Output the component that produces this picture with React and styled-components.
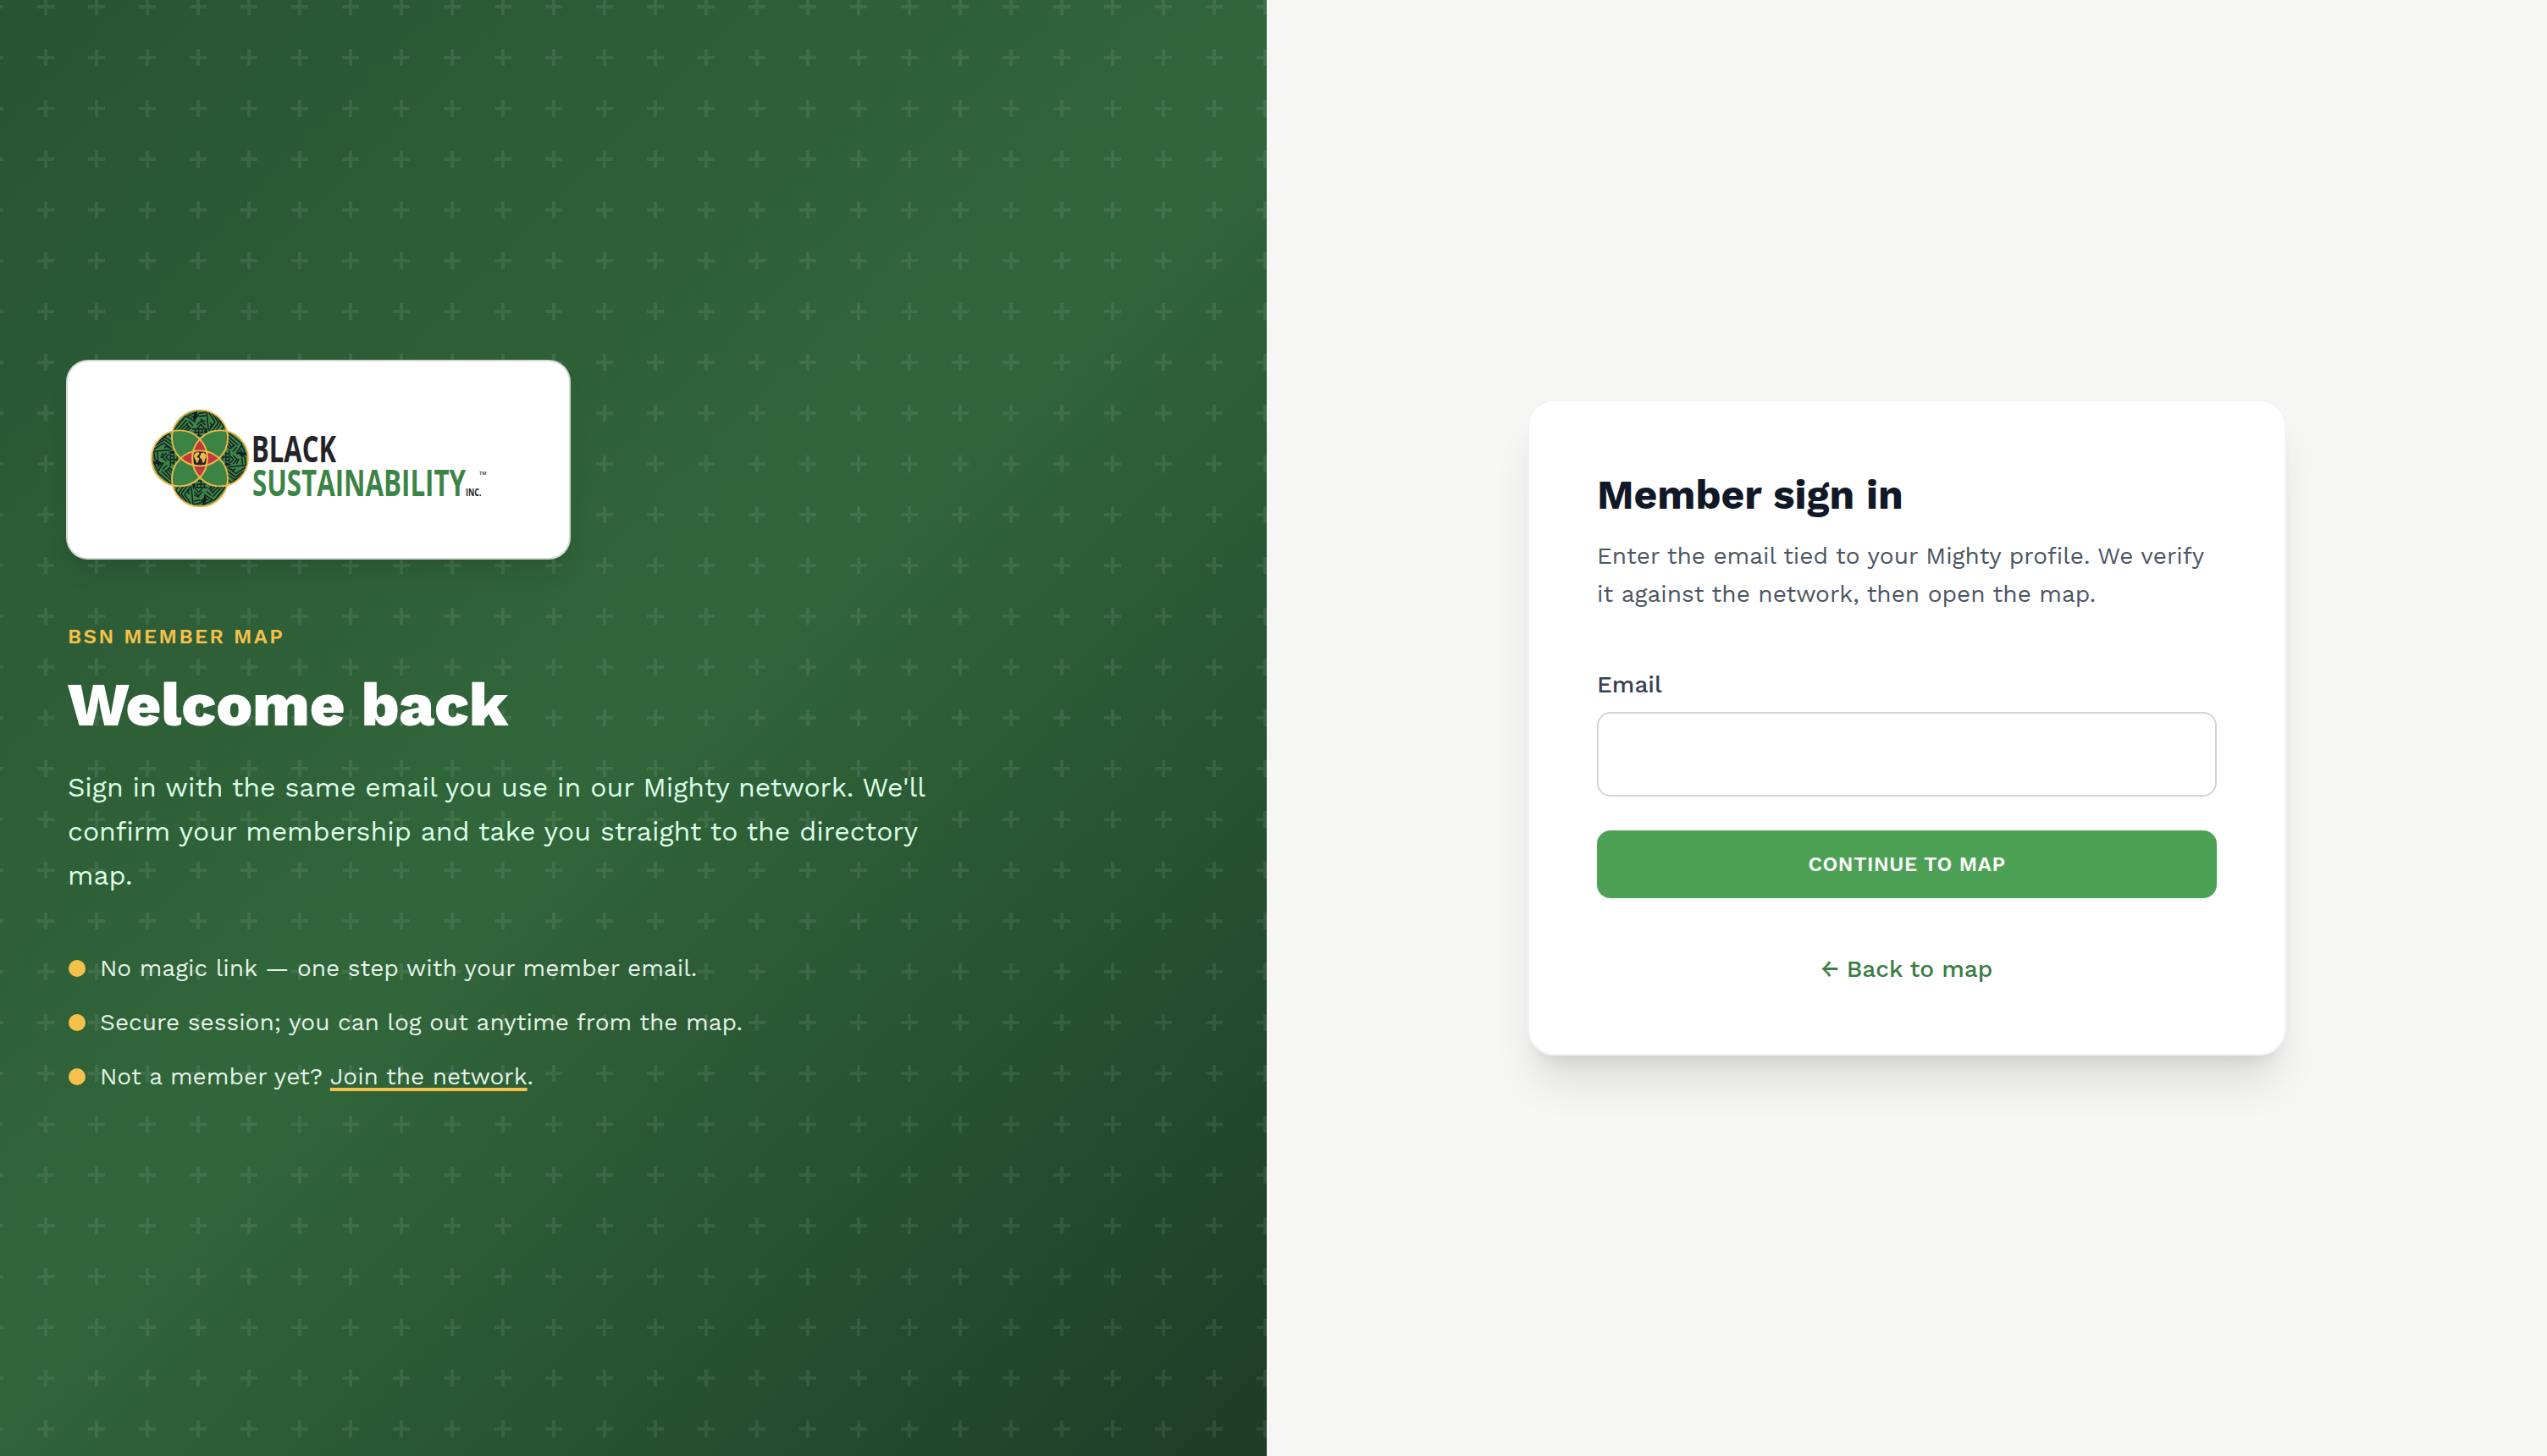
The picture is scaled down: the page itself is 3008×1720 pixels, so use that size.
import React from 'react'
import styled, { createGlobalStyle } from 'styled-components'

// STYLES
const GlobalStyle = createGlobalStyle`
    * {
        box-sizing: border-box;
    }

    body {
        margin: 0;
        font-family: "Work Sans", Inter, "Liberation Sans", sans-serif;
        background-color: #f6f6f4;
    }
`;

const Page = styled.main`
    display: grid;
    grid-template-columns: 1496px 1fr;
    height: 100vh;
    overflow: hidden;
`;

const BrandPanel = styled.section`
    display: flex;
    flex-direction: column;
    justify-content: center;
    align-items: flex-start;
    padding: 1px 80px 0;
    background-image:
        url("data:image/svg+xml,%3Csvg width='60' height='60' viewBox='0 0 60 60' xmlns='http://www.w3.org/2000/svg'%3E%3Cpath d='M8 0h4v8h8v4h-8v8H8v-8H0V8h8z' fill='%23fff' fill-opacity='.08'/%3E%3C/svg%3E"),
        linear-gradient(135deg, #295332 0%, #31663a 50%, #1e3c27 100%);
    background-position: 44px -2px, 0 0;
    background-size: 60px 60px, auto;
`;

const FormPanel = styled.section`
    display: flex;
    align-items: center;
    justify-content: center;
    padding-bottom: 1px;
`;

const LogoCard = styled.div`
    display: flex;
    align-items: center;
    justify-content: center;
    width: 592px;
    height: 232px;
    border-radius: 24px;
    background-color: #fff;
    box-shadow:
        0 0 0 2px #d2dad4,
        0 20px 30px -6px rgba(0, 0, 0, 0.1),
        0 8px 12px -8px rgba(0, 0, 0, 0.1);
`;

const Eyebrow = styled.p`
    margin: 77px 0 0;
    color: #f6c14b;
    font-size: 24px;
    font-weight: 600;
    line-height: 32px;
    letter-spacing: 2.4px;
`;

const Title = styled.h1`
    margin: 24px 0 0;
    color: #fff;
    font-size: 72px;
    font-weight: 800;
    line-height: 80px;
`;

const Lead = styled.p`
    margin: 32px 0 0;
    max-width: 1072px;
    color: #dcfce7;
    font-size: 32px;
    line-height: 52px;
`;

const Points = styled.ul`
    display: flex;
    flex-direction: column;
    gap: 20px;
    margin: 62px 0 0;
    padding: 0;
    list-style: none;
`;

const Point = styled.li`
    display: flex;
    align-items: center;
    gap: 17px;
    color: rgba(240, 253, 244, 0.95);
    font-size: 28px;
    line-height: 44px;
`;

const Dot = styled.span`
    flex: none;
    width: 20px;
    height: 20px;
    margin-left: 1px;
    border-radius: 50%;
    background-color: #f6c14b;
`;

const JoinLink = styled.a`
    color: inherit;
    text-decoration: underline;
    text-decoration-color: #f6c14b;
    text-decoration-thickness: 4px;
    text-decoration-skip-ink: none;
    text-underline-offset: 4px;
`;

const Card = styled.form`
    display: flex;
    flex-direction: column;
    width: 896px;
    padding: 80px;
    border: 2px solid #f3f4f6;
    border-radius: 32px;
    background-color: #fff;
    box-shadow:
        0 40px 50px -10px rgba(0, 0, 0, 0.1),
        0 16px 20px -12px rgba(0, 0, 0, 0.1);
`;

const CardTitle = styled.h2`
    margin: 0;
    color: #111827;
    font-size: 48px;
    font-weight: 700;
    line-height: 62px;
`;

const CardText = styled.p`
    margin: 18px 0 0;
    color: #4b5563;
    font-size: 28px;
    line-height: 45px;
`;

const Label = styled.label`
    margin-top: 65px;
    color: #374151;
    font-size: 28px;
    font-weight: 500;
    line-height: 40px;
`;

const Input = styled.input`
    height: 100px;
    margin-top: 12px;
    padding: 0 28px;
    border: 2px solid #d1d5db;
    border-radius: 16px;
    background-color: #fff;
    font: inherit;
    font-size: 28px;
    outline: none;
`;

const Button = styled.button`
    height: 80px;
    margin-top: 40px;
    border: 0;
    border-radius: 16px;
    background-color: #4da154;
    box-shadow: 0 2px 4px rgba(0, 0, 0, 0.05);
    color: #fff;
    font-family: inherit;
    font-size: 24px;
    font-weight: 600;
    letter-spacing: 0.6px;
    text-transform: uppercase;
`;

const BackLink = styled.a`
    align-self: center;
    margin-top: 64px;
    color: #3a7d44;
    font-size: 28px;
    font-weight: 500;
    line-height: 40px;
    text-decoration: none;
`;

const LogoSvg = styled.svg`
    overflow: visible;
`;

const LogoText = styled.text`
    font-family: "Open Sans", "Noto Sans", sans-serif;
    font-weight: ${({ $weight }) => $weight || 750};
    font-size: ${({ $size }) => $size}px;
    fill: ${({ $color }) => $color || '#252229'};
`;

// LOGO
const YELLOW = '#f2b748';
const GREEN = '#3b8446';
const RED = '#bf3a3d';
const DARK = '#141f24';

const circles = [[0, -24], [24, 0], [0, 24], [-24, 0]];

// tribal hatching of one lobe, three units to the pixel
const Hatch = ({ turn }) => (
    <g transform={`rotate(${turn}) scale(.3333)`} fill="none" stroke={DARK} strokeWidth="4.4">
        <path d="M-92-100l42-50M-84-94l38-42M-74-94l32-30M-60-94l22-20M-46-96l14-12" />
        <path d="M-46-148l34-16-6 34zM-32-144l12-6-2 12M-40-132l16 16M-48-122l14 14" />
        <path d="M-28-104h46M-22-92h34M-14-80h20M-16-104v14M-4-104v22M8-104v14" />
        <path d="M-10-118l14-14 16 14M-8-108l12-12 12 12M-6-158l30-6M-2-148l24-4M2-138l18 8" />
        <path d="M24-168l6 66M32-162l22 34-22 30M44-160l22 34-22 30M58-150l18 26-20 28M72-134l14 22-16 18" />
        <path d="M36-126l8 8-8 8" />
        <path d="M-20-164l-2 32 20-20zM22-112l8 28-16-8z" fill={DARK} strokeWidth="0" />
    </g>
)

const Logo = () => (
    <LogoSvg width="400" height="130" viewBox="0 0 400 130" role="img" aria-label="Black Sustainability Inc.">
        <defs>
            <clipPath id="lobes">
                {circles.map(([x, y]) => <circle key={`${x},${y}`} cx={x} cy={y} r="33" />)}
            </clipPath>
        </defs>
        <g transform="translate(60 63.4)">
            {circles.map(([x, y]) => <circle key={`${x},${y}`} cx={x} cy={y} r="33" fill={GREEN} />)}
            <g clipPath="url(#lobes)">
                {[0, 90, 180, 270].map(turn => <Hatch key={turn} turn={turn} />)}
            </g>
            {[0, 90, 180, 270].map(turn => (
                <path key={turn} transform={`rotate(${turn})`} d="M8 8A33 33 0 0 1-32-32A33 33 0 0 1 8 8z" fill={GREEN} />
            ))}
            <path d="M0-22.6A33 33 0 0 1 0 22.6A33 33 0 0 1 0-22.6z" fill={RED} />
            <path d="M-22.6 0A33 33 0 0 1 22.6 0A33 33 0 0 1-22.6 0z" fill={RED} />
            <rect x="-8.6" y="-8.6" width="17.2" height="17.2" rx="1.5" fill={YELLOW} />
            <rect x="-7.6" y="-8.6" width="15.2" height="17.2" rx="4.5" fill="#252229" />
            <path
                d="M-6.8-4.5l2-2.3 3.5-.4 1 1.6-1.4 2.2-1.8 1 .8 1.4 2 .9-.4 2.3-1.5 2.6-.8 1.6-1.1-3.6-1.7-2.6-.7-2.6zM1.6-6.4l3.2-.6 2.2 2.6.3 3.6-1.2 1.7-.6 3.1-1.5 1.8-1.3-2.8-.5-2.4-1.9-.8-.5-2.3 1.2-1.7z"
                fill={YELLOW}
            />
            {circles.map(([x, y]) => (
                <circle key={`${x},${y}`} cx={x} cy={y} r="33" fill="none" stroke={YELLOW} strokeWidth="1.9" />
            ))}
        </g>
        <LogoText x="121" y="68" $size={43.4} textLength="100" lengthAdjust="spacingAndGlyphs">BLACK</LogoText>
        <LogoText x="122" y="108" $size={43.4} $color={GREEN} textLength="252" lengthAdjust="spacingAndGlyphs">SUSTAINABILITY</LogoText>
        <LogoText x="374" y="108" $size={12.6} $weight={700} textLength="18.5" lengthAdjust="spacingAndGlyphs">INC.</LogoText>
        <LogoText x="390" y="82.5" $size={5.5} $weight={600} textLength="8.5" lengthAdjust="spacingAndGlyphs">TM</LogoText>
    </LogoSvg>
)

// MARKUP
const App = () => {
    return (
        <Page>
            <GlobalStyle />
            <BrandPanel>
                <LogoCard>
                    <Logo />
                </LogoCard>
                <Eyebrow>BSN MEMBER MAP</Eyebrow>
                <Title>Welcome back</Title>
                <Lead>Sign in with the same email you use in our Mighty network. We'll confirm your membership and take you straight to the directory map.</Lead>
                <Points>
                    <Point><Dot /><span>No magic link — one step with your member email.</span></Point>
                    <Point><Dot /><span>Secure session; you can log out anytime from the map.</span></Point>
                    <Point><Dot /><span>Not a member yet? <JoinLink href="#join">Join the network</JoinLink>.</span></Point>
                </Points>
            </BrandPanel>
            <FormPanel>
                <Card>
                    <CardTitle>Member sign in</CardTitle>
                    <CardText>Enter the email tied to your Mighty profile. We verify it against the network, then open the map.</CardText>
                    <Label htmlFor="email">Email</Label>
                    <Input id="email" type="email" />
                    <Button type="button">Continue to map</Button>
                    <BackLink href="#map">← Back to map</BackLink>
                </Card>
            </FormPanel>
        </Page>
    )
}

export default App
